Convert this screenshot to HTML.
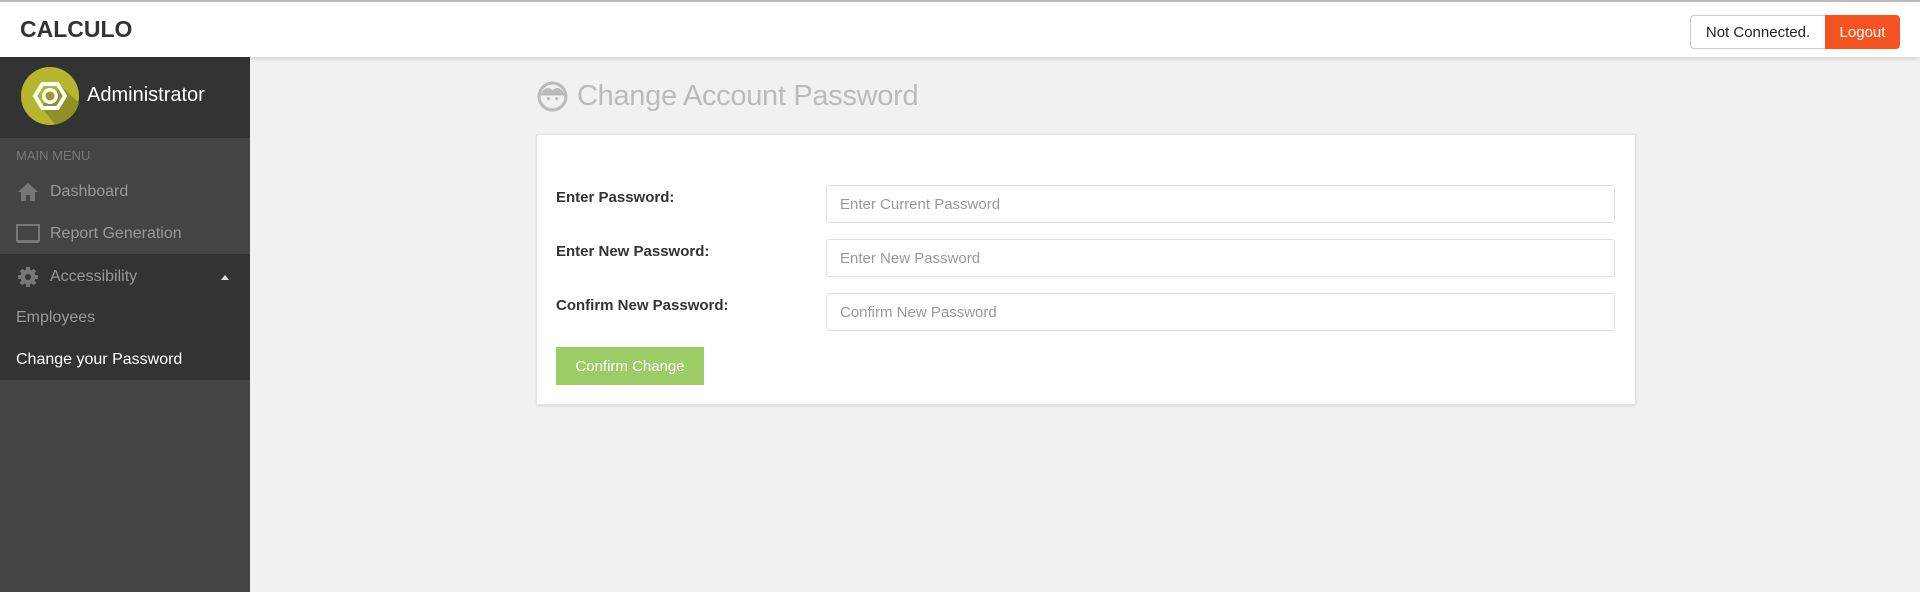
<!DOCTYPE html>
<html><head><style>
*{box-sizing:border-box;margin:0;padding:0}
body{width:1920px;height:592px;overflow:hidden;background:#f1f1f1;font-family:"Liberation Sans",sans-serif;position:relative}
.hdr{position:absolute;left:0;top:0;width:1920px;height:57px;background:#fff;border-top:2px solid #bbb;box-shadow:0 2px 4px rgba(0,0,0,.12);z-index:2}
.logo{position:absolute;left:20px;top:14px;font-size:23px;font-weight:bold;color:#333}
.nc{position:absolute;left:1690px;top:13px;width:136px;height:34px;border:1px solid #ccc;border-radius:4px 0 0 4px;font-size:15px;color:#222;line-height:33px;text-align:center;background:#fff}
.lo{position:absolute;left:1825px;top:13px;width:75px;height:34px;background:#f55422;border-radius:0 4px 4px 0;color:#fff;font-size:15px;line-height:35px;text-align:center}
.sb{position:absolute;left:0;top:57px;width:250px;height:535px;background:#444}
.prof{position:absolute;left:0;top:0;width:250px;height:81px;background:#333}
.dark{position:absolute;left:0;top:197px;width:250px;height:126px;background:#333}
.t{position:absolute;font-size:16px;color:#999}
.card{position:absolute;left:536px;top:134px;width:1100px;height:271px;background:#fff;border:1px solid #e3e3e3;box-shadow:0 1px 2px rgba(0,0,0,.1)}
.lbl{position:absolute;left:556px;font-size:15px;font-weight:bold;color:#333}
.in{position:absolute;left:826px;width:789px;height:38px;border:1px solid #e2e2e2;border-radius:3px;font-size:15px;color:#999;padding-left:13px;line-height:38px;background:#fff}
</style></head><body>
<div class="hdr"><div class="logo">CALCULO</div><div class="nc">Not Connected.</div><div class="lo">Logout</div></div>
<div class="sb">
<div class="prof">
<svg style="position:absolute;left:21px;top:10px" width="58" height="58" viewBox="0 0 58 58"><circle cx="29" cy="29" r="29" fill="#b5b82e"/><path d="M40 19 L58 36 A29 29 0 0 1 34 57.5 L20 40 Z" fill="#8f9126"/><polygon points="14,29 21.5,17 36.5,17 44,29 36.5,41 21.5,41" fill="none" stroke="#fff" stroke-width="4"/><circle cx="29" cy="29" r="8" fill="#fff"/><circle cx="29" cy="29" r="4.5" fill="#9a9d28"/></svg>
<div class="t" style="left:87px;top:27px;color:#fff;font-size:20px">Administrator</div>
</div>
<div class="t" style="left:16px;top:91px;font-size:13px;color:#777">MAIN MENU</div>
<svg style="position:absolute;left:17px;top:125px" width="22" height="20" viewBox="0 0 22 20"><path d="M11 1 L1 10 H4 V19 H9 V13 H13 V19 H18 V10 H21 Z" fill="#777"/></svg>
<div class="t" style="left:50px;top:126px">Dashboard</div>
<svg style="position:absolute;left:16px;top:167px" width="24" height="20" viewBox="0 0 24 20"><rect x="1" y="1" width="22" height="16" fill="none" stroke="#777" stroke-width="2"/><rect x="1" y="16" width="22" height="3" fill="#777"/></svg>
<div class="dark"></div>
<svg style="position:absolute;left:17px;top:209px" width="22" height="22" viewBox="0 0 22 22"><g stroke="#777" stroke-width="4"><line x1="11" y1="1" x2="11" y2="21"/><line x1="1" y1="11" x2="21" y2="11"/><line x1="4" y1="4" x2="18" y2="18"/><line x1="18" y1="4" x2="4" y2="18"/></g><circle cx="11" cy="11" r="7.5" fill="#777"/><circle cx="11" cy="11" r="3" fill="#333"/></svg>
<div class="t" style="left:50px;top:168px">Report Generation</div>
<div class="t" style="left:50px;top:211px">Accessibility</div>
<svg style="position:absolute;left:221px;top:218px" width="8" height="5"><path d="M0 5 L4 0 L8 5Z" fill="#ddd"/></svg>
<div class="t" style="left:16px;top:252px">Employees</div>
<div class="t" style="left:16px;top:294px;color:#fff">Change your Password</div>
</div>
<svg style="position:absolute;left:537px;top:81px" width="31" height="31" viewBox="0 0 30 30"><circle cx="15" cy="15" r="13" fill="none" stroke="#bbb" stroke-width="3"/><path d="M3 14 C6 6 12 5 15 9 C18 5 24 6 27 14" fill="#bbb"/><circle cx="11" cy="17" r="1.5" fill="#bbb"/><circle cx="19" cy="17" r="1.5" fill="#bbb"/></svg>
<div style="position:absolute;left:577px;top:80px;font-size:29px;color:#bbb;letter-spacing:-0.3px">Change Account Password</div>
<div class="card"></div>
<div class="lbl" style="top:189px">Enter Password:</div>
<div class="lbl" style="top:243px">Enter New Password:</div>
<div class="lbl" style="top:297px">Confirm New Password:</div>
<div class="in" style="top:185px">Enter Current Password</div>
<div class="in" style="top:239px">Enter New Password</div>
<div class="in" style="top:293px">Confirm New Password</div>
<div style="position:absolute;left:556px;top:347px;width:148px;height:38px;background:#9ccc65;color:#fff;font-size:15px;line-height:40px;text-align:center">Confirm Change</div>
</body></html>
